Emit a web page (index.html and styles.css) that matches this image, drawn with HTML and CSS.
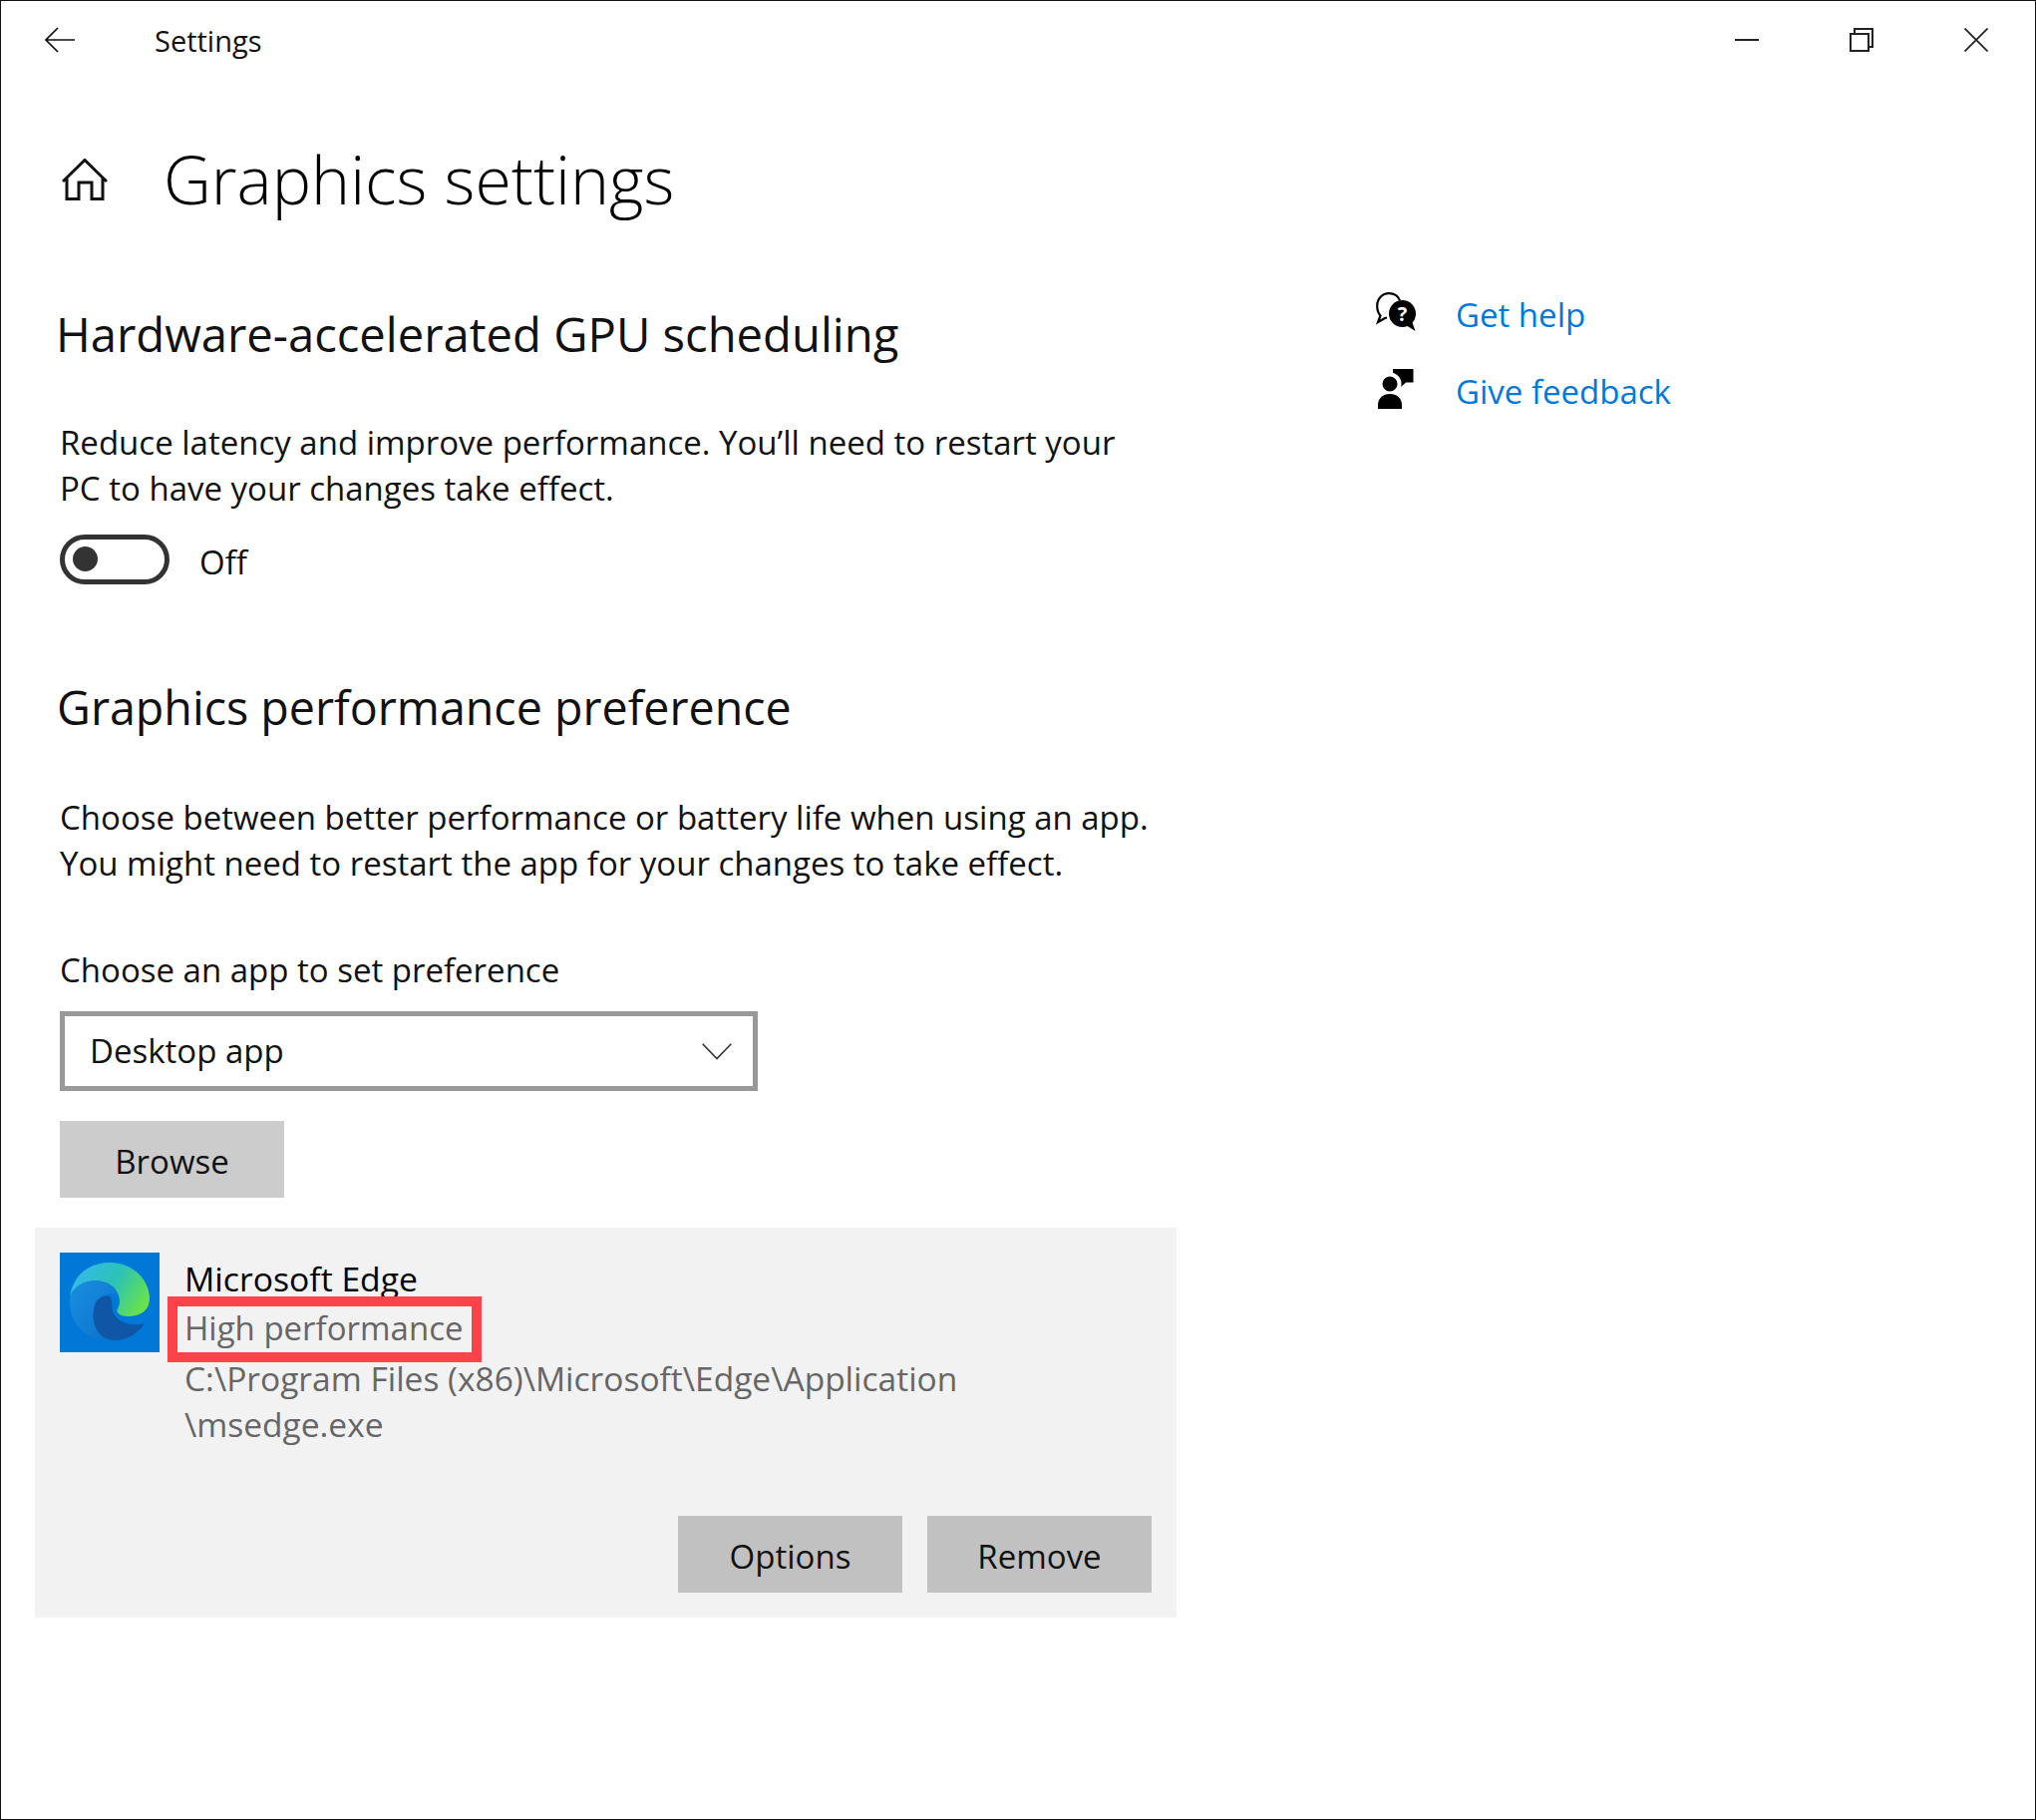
FILE: index.html
```html
<!DOCTYPE html>
<html lang="en">
<head>
<meta charset="utf-8">
<title>Settings</title>
<link rel="stylesheet" href="styles.css">
</head>
<body>
<div class="window">
  <header class="titlebar">
    <div class="tb-left">
      <svg class="back" width="30" height="26" viewBox="0 0 30 26"><path d="M1 13H30M13 1L1 13l12 12" fill="none" stroke="#111" stroke-width="1.7"/></svg>
      <span class="tb-title">Settings</span>
    </div>
    <div class="tb-right">
      <svg width="24" height="24" viewBox="0 0 24 24"><path d="M0 12h24" stroke="#222" stroke-width="2"/></svg>
      <svg width="24" height="24" viewBox="0 0 24 24"><path d="M1 6h18v17H1zM5 5V1h18v18h-4" fill="none" stroke="#222" stroke-width="2"/></svg>
      <svg width="24" height="24" viewBox="0 0 24 24"><path d="M.5.5l23 23M23.500.5l-23 23" stroke="#222" stroke-width="1.7"/></svg>
    </div>
  </header>
  <div class="content">
    <main class="main">
      <div class="page-head">
        <svg class="home" width="46" height="42" viewBox="0 0 46 42"><path d="M1 23L23 1.500 45 23M5 19V40.500H17V24H30V40.500H41V19" fill="none" stroke="#111" stroke-width="3"/></svg>
        <h1>Graphics settings</h1>
      </div>
      <h2 class="h-gpu">Hardware-accelerated GPU scheduling</h2>
      <p class="text p-gpu">Reduce latency and improve performance. You’ll need to restart your<br>PC to have your changes take effect.</p>
      <div class="toggle-row">
        <span class="toggle"><span class="knob"></span></span>
        <span class="text off">Off</span>
      </div>
      <h2 class="h-pref">Graphics performance preference</h2>
      <p class="text p-pref">Choose between better performance or battery life when using an app.<br>You might need to restart the app for your changes to take effect.</p>
      <div class="text label">Choose an app to set preference</div>
      <div class="select text">
        <span>Desktop app</span>
        <svg width="30" height="17" viewBox="0 0 30 17"><path d="M.7.7L15 15.500 29.300.7" fill="none" stroke="#333" stroke-width="1.6"/></svg>
      </div>
      <button class="btn browse">Browse</button>
      <section class="app">
        <div class="app-top">
          <svg class="edge" width="100" height="100" viewBox="0 0 100 100">
            <defs>
              <linearGradient id="g1" x1="0" y1="0.2" x2="1" y2="0.6"><stop offset="0" stop-color="#35b8ef"/><stop offset="0.55" stop-color="#2cc3b4"/><stop offset="1" stop-color="#68e24c"/></linearGradient>
              <linearGradient id="g3" x1="0" y1="0" x2="1" y2="1"><stop offset="0" stop-color="#1a8fe0"/><stop offset="1" stop-color="#0a70cc"/></linearGradient>
            </defs>
            <rect width="100" height="100" fill="#0078d7"/>
            <path d="M10 44C14 20 32 10 50 10c24 0 40 18 40 36 0 14-12 18-22 18-8 0-12-4-10-8 4-6 2-18-8-24-8-5-30-8-40 12z" fill="url(#g1)"/>
            <path d="M10 44c10-20 32-17 40-12 4 2 7 6 8 10-8-3-19 1-23 11-5 12 1 30 15 36C24 88 8 70 10 44z" fill="url(#g3)"/>
            <path d="M35 53c-5 17 3 35 21 35 12 0 24-8 29-17-10 3-23 1-29-7-6-6-2-18-6-20-7-2-14 3-15 9z" fill="#0f57a6"/>
          </svg>
          <div class="app-info">
            <div class="text app-name">Microsoft Edge</div>
            <div class="text muted app-pref"><span class="mark">High performance</span></div>
            <div class="text muted app-path">C:\Program Files (x86)\Microsoft\Edge\Application<br>\msedge.exe</div>
          </div>
        </div>
        <div class="app-actions">
          <button class="btn btn-dark">Options</button>
          <button class="btn btn-dark">Remove</button>
        </div>
      </section>
    </main>
    <aside class="side">
      <a class="link"><svg width="40" height="40" viewBox="0 0 40 40"><path d="M11 25.500l-2 .5-7 4 2.500-6.500C2 21 1.200 17 1.200 13.500 1.200 6.500 6.500 1.200 13 1.200c5 0 9 2.500 11 7" fill="none" stroke="#000" stroke-width="2.2"/><circle cx="26.500" cy="21.500" r="13.500" fill="#000"/><path d="M30 33l9.500 6-3.500-10z" fill="#000"/><text x="26.500" y="29" class="qmark">?</text></svg><span>Get help</span></a>
      <a class="link"><svg width="40" height="40" viewBox="0 0 40 40"><path d="M17 0H37.500V13.500H30L24.500 18.500 21 11 17 5z" fill="#000"/><circle cx="14" cy="15" r="9.500" fill="#000" stroke="#fff" stroke-width="4"/><path d="M2 40V36C2 29.500 7 25 14 25S26 29.500 26 36V40z" fill="#000"/></svg><span>Give feedback</span></a>
    </aside>
  </div>
</div>
</body>
</html>
```
FILE: styles.css
```css
* { box-sizing: border-box; }
html, body { margin: 0; padding: 0; background: #fff; }
body { font-family: "Open Sans", "Noto Sans", sans-serif; color: #000; }
.window { width: 2042px; height: 1825px; border: 1px solid #111; display: flex; flex-direction: column; overflow: hidden; }
.titlebar { height: 78px; flex: none; display: flex; justify-content: space-between; align-items: center; }
.tb-left { display: flex; align-items: center; padding-left: 44px; }
.tb-title { font-size: 29px; margin-left: 80px; color: #111; }
.tb-right { display: flex; gap: 91px; padding-right: 47px; }
.content { display: flex; flex: 1; }
.main { width: 1180px; padding-left: 59px; flex: none; }
.side { padding-top: 213px; padding-left: 199px; display: flex; flex-direction: column; gap: 30px; }
.page-head { display: flex; align-items: center; height: 100px; margin-top: 51px; }
.home { margin-left: 2px; }
h1 { margin: -2px 0 0 56px; font-size: 66.2px; font-weight: 300; line-height: 100px; color: #000; }
h2 { margin: 0; font-weight: 400; color: #111; line-height: 62px; }
.h-gpu { margin-top: 74px; margin-left: -4px; font-size: 47.2px; }
.text { font-size: 33px; line-height: 46px; color: #111; }
p { margin: 0; }
.p-gpu { margin-top: 55px; }
.toggle-row { display: flex; align-items: center; gap: 30px; margin-top: 21px; }
.toggle { width: 110px; height: 50px; border: 5px solid #333; border-radius: 25px; display: flex; align-items: center; padding-left: 8px; }
.knob { width: 25px; height: 25px; background: #333; border-radius: 50%; }
.off { padding-top: 7px; }
.h-pref { margin-top: 91px; margin-left: -3px; font-size: 46.6px; }
.p-pref { margin-top: 57px; }
.label { margin-top: 61px; }
.select { margin-top: 18px; width: 700px; height: 80px; border: 5px solid #999; display: flex; align-items: center; justify-content: space-between; padding: 0 21px 0 25px; }
.btn { display: block; width: 225px; height: 77px; padding: 3px 0 0; background: #ccc; border: 0; font: inherit; font-size: 33px; color: #111; }
.btn-dark { background: #c1c1c1; }
.browse { margin-top: 30px; }
.app { margin: 30px 0 0 -25px; width: 1145px; height: 391px; background: #f2f2f2; padding: 25px; display: flex; flex-direction: column; justify-content: space-between; }
.app-top { display: flex; gap: 25px; }
.edge { flex: none; }
.app-name { line-height: 50px; color: #000; margin-top: 1px; font-size: 33.7px; }
.muted { color: #666; }
.app-pref { line-height: 50px; }
.mark { position: relative; display: inline-block; }
.mark::after { content: ""; position: absolute; left: -17px; right: -18px; top: -7px; bottom: -9px; border: 10px solid #fd4349; }
.app-path { margin-top: 2px; font-size: 33.5px; }
.app-actions { display: flex; justify-content: flex-end; gap: 25px; }
.link { display: flex; align-items: center; gap: 40px; font-size: 33px; color: #0078d7; height: 47px; }
.link svg { flex: none; margin-bottom: 5px; }
.qmark { fill: #fff; font-size: 20px; font-weight: 700; text-anchor: middle; font-family: "Open Sans", sans-serif; }
```
